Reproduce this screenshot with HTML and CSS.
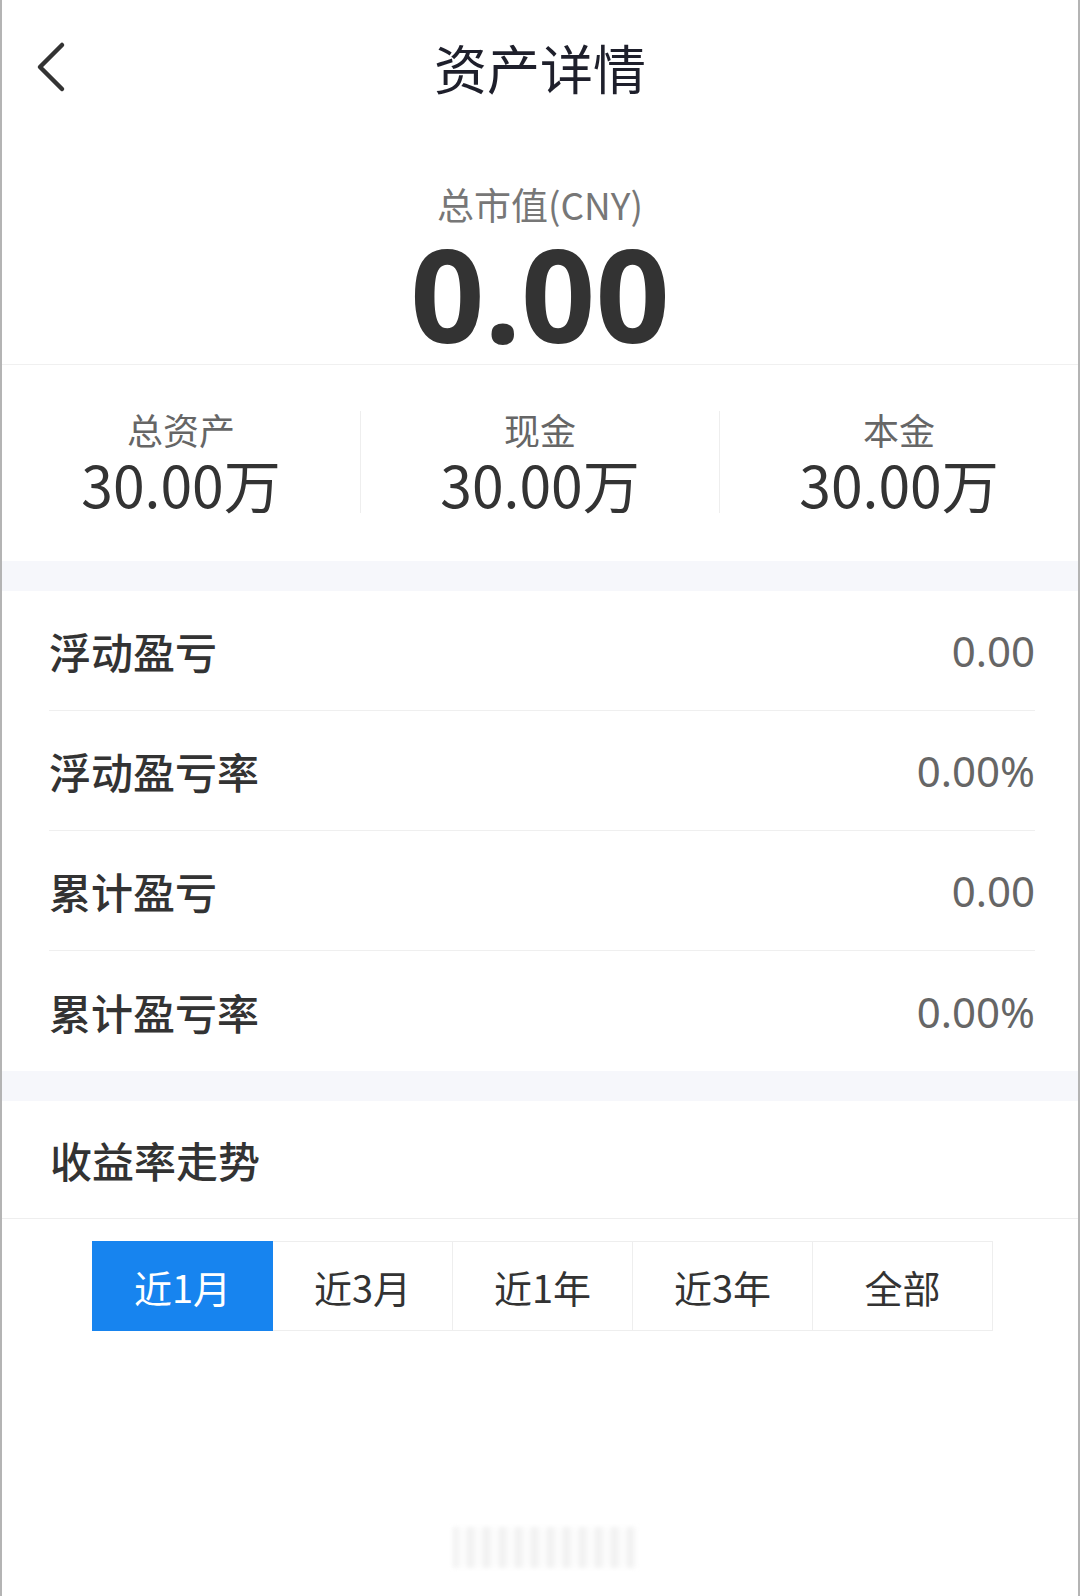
FILE: index.html
```html
<!DOCTYPE html>
<html lang="zh-CN">
<head>
<meta charset="UTF-8">
<meta name="viewport" content="width=device-width, initial-scale=1.0">
<title>资产详情</title>
<link rel="stylesheet" href="styles.css">
</head>
<body>
<div class="page">
  <div class="header">
    <a class="back" href="#">
      <svg width="32" height="52" viewBox="0 0 32 52">
        <polyline points="26,4 4,26 26,48" fill="none" stroke="#333" stroke-width="4.5" stroke-linecap="round" stroke-linejoin="round"/>
      </svg>
    </a>
    <h1 class="title">资产详情</h1>
    <span></span>
  </div>

  <div class="summary">
    <div class="summary-label">总市值(CNY)</div>
    <div class="summary-value">0.00</div>
  </div>

  <div class="stats">
    <div class="stat">
      <div class="stat-label">总资产</div>
      <div class="stat-value">30.00万</div>
    </div>
    <div class="stat">
      <div class="stat-label">现金</div>
      <div class="stat-value">30.00万</div>
    </div>
    <div class="stat">
      <div class="stat-label">本金</div>
      <div class="stat-value">30.00万</div>
    </div>
  </div>

  <div class="gap"></div>

  <div class="list">
    <div class="row"><span class="row-label">浮动盈亏</span><span class="row-value">0.00</span></div>
    <div class="row"><span class="row-label">浮动盈亏率</span><span class="row-value">0.00%</span></div>
    <div class="row"><span class="row-label">累计盈亏</span><span class="row-value">0.00</span></div>
    <div class="row"><span class="row-label">累计盈亏率</span><span class="row-value">0.00%</span></div>
  </div>

  <div class="gap"></div>

  <div class="section-title">收益率走势</div>

  <div class="tabs">
    <div class="tab active">近1月</div>
    <div class="tab">近3月</div>
    <div class="tab">近1年</div>
    <div class="tab">近3年</div>
    <div class="tab">全部</div>
  </div>

  <div class="watermark"></div>
</div>
</body>
</html>
```

FILE: styles.css
```css
body {
  margin: 0;
  padding: 0;
  background-color: #fff;
  font-family: "Noto Sans CJK SC", "Noto Sans", sans-serif;
  color: #333;
}
.page {
  box-sizing: border-box;
  width: 1080px;
  min-height: 1596px;
  border-left: 2px solid #b4b4b4;
  border-right: 2px solid #b4b4b4;
  background-color: #fff;
}

/* top bar */
.header {
  height: 134px;
  display: grid;
  grid-template-columns: 1fr auto 1fr;
  align-items: center;
}
.back {
  display: flex;
  align-items: center;
  padding-left: 34px;
}
.title {
  margin: 0;
  font-size: 53px;
  font-weight: 400;
  color: #1e1f2b;
  line-height: 60px;
}

/* total value */
.summary {
  text-align: center;
  padding-top: 50px;
  padding-bottom: 21px;
  border-bottom: 1px solid #f0f0f0;
}
.summary-label {
  font-size: 37px;
  line-height: 40px;
  color: #777;
}
.summary-value {
  font-family: "Noto Sans", sans-serif;
  font-size: 130px;
  font-weight: 700;
  line-height: 100px;
  margin-top: 19px;
  color: #333;
}

/* three columns */
.stats {
  display: flex;
  padding: 46px 0 48px;
}
.stat {
  flex: 1;
  text-align: center;
  border-left: 1px solid #eee;
}
.stat:first-child {
  border-left: none;
}
.stat-label {
  font-size: 36px;
  line-height: 36px;
  padding-bottom: 6px;
  color: #666;
}
.stat-value {
  font-size: 57px;
  line-height: 60px;
  color: #333;
}

.gap {
  height: 30px;
  background-color: #f6f7fb;
}

/* profit rows */
.list {
  padding: 0 43px 0 47px;
}
.row {
  box-sizing: border-box;
  height: 120px;
  display: flex;
  justify-content: space-between;
  align-items: center;
  border-bottom: 1px solid #efefef;
}
.row:last-child {
  border-bottom: none;
}
.row-label {
  font-size: 42px;
  font-weight: 500;
  color: #333;
}
.row-value {
  font-family: "Noto Sans", "Noto Sans CJK SC", sans-serif;
  font-size: 42px;
  color: #666;
}

.section-title {
  height: 117px;
  display: flex;
  align-items: center;
  padding-left: 48px;
  font-size: 42px;
  font-weight: 500;
  color: #333;
  border-bottom: 1px solid #eee;
}

/* period switch */
.tabs {
  display: flex;
  width: 901px;
  margin: 22px 0 0 90px;
}
.tab {
  flex: 1;
  height: 88px;
  display: flex;
  justify-content: center;
  align-items: center;
  font-size: 38px;
  color: #333;
  border: 1px solid #eee;
  border-left: none;
}
.tab:first-child {
  border-left: 1px solid #eee;
}
.tab.active {
  background-color: #1784ef;
  border-color: #1784ef;
  color: #fff;
}

.watermark {
  width: 183px;
  height: 41px;
  margin: 196px 0 0 451px;
  background: repeating-linear-gradient(90deg, #e4e4e4 0, #f4f4f4 6px, #fff 11px, #e8e8e8 16px);
  filter: blur(2px);
  opacity: 0.6;
}
```
